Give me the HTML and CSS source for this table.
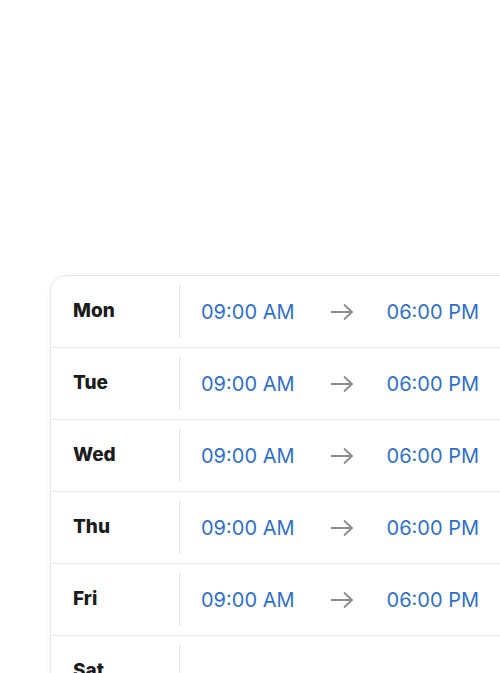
FILE: index.html
```html
<!DOCTYPE html>
<html lang="en">
<head>
    <meta charset="UTF-8">
    <meta name="viewport" content="width=device-width, initial-scale=1.0">
    <title>Opening Hours</title>
    <link rel="stylesheet" href="styles.css">
</head>
<body>
    <div class="hours-card">
        <div class="row">
            <div class="day">Mon</div>
            <div class="times">
                <span class="time">09:00 AM</span>
                <svg class="arrow" width="24" height="18" viewBox="0 0 24 18"><path d="M1 9h21M14 1.5L22 9l-8 7.5" fill="none" stroke="#8a8a8a" stroke-width="1.8"/></svg>
                <span class="time">06:00 PM</span>
            </div>
        </div>
        <div class="row">
            <div class="day">Tue</div>
            <div class="times">
                <span class="time">09:00 AM</span>
                <svg class="arrow" width="24" height="18" viewBox="0 0 24 18"><path d="M1 9h21M14 1.5L22 9l-8 7.5" fill="none" stroke="#8a8a8a" stroke-width="1.8"/></svg>
                <span class="time">06:00 PM</span>
            </div>
        </div>
        <div class="row">
            <div class="day">Wed</div>
            <div class="times">
                <span class="time">09:00 AM</span>
                <svg class="arrow" width="24" height="18" viewBox="0 0 24 18"><path d="M1 9h21M14 1.5L22 9l-8 7.5" fill="none" stroke="#8a8a8a" stroke-width="1.8"/></svg>
                <span class="time">06:00 PM</span>
            </div>
        </div>
        <div class="row">
            <div class="day">Thu</div>
            <div class="times">
                <span class="time">09:00 AM</span>
                <svg class="arrow" width="24" height="18" viewBox="0 0 24 18"><path d="M1 9h21M14 1.5L22 9l-8 7.5" fill="none" stroke="#8a8a8a" stroke-width="1.8"/></svg>
                <span class="time">06:00 PM</span>
            </div>
        </div>
        <div class="row">
            <div class="day">Fri</div>
            <div class="times">
                <span class="time">09:00 AM</span>
                <svg class="arrow" width="24" height="18" viewBox="0 0 24 18"><path d="M1 9h21M14 1.5L22 9l-8 7.5" fill="none" stroke="#8a8a8a" stroke-width="1.8"/></svg>
                <span class="time">06:00 PM</span>
            </div>
        </div>
        <div class="row">
            <div class="day">Sat</div>
            <div class="times"></div>
        </div>
    </div>
</body>
</html>
```

FILE: styles.css
```css
body {
    margin: 0;
    background-color: #fff;
    font-family: Inter, "Liberation Sans", sans-serif;
    overflow: hidden;
}
.hours-card {
    width: 480px;
    margin: 275px 0 0 50px;
    border: 1px solid #e8e8e8;
    border-radius: 16px;
    box-shadow: 0 2px 6px rgba(0, 0, 0, 0.06);
    background-color: #fff;
}
.row {
    display: flex;
    align-items: center;
    height: 71px;
    border-bottom: 1px solid #e6e6e6;
}
.row:last-child {
    border-bottom: none;
}
.day {
    width: 106px;
    padding-left: 22px;
    font-size: 19px;
    font-weight: 800;
    color: #1c1c1c;
    border-right: 1px solid #e4e4e4;
    height: 53px;
    line-height: 52px;
}
.times {
    display: flex;
    align-items: center;
    padding-left: 21px;
    height: 53px;
}
.time {
    font-size: 20px;
    color: #2f6fcc;
}
.arrow {
    margin: 0 33px 0 35px;
}
```
